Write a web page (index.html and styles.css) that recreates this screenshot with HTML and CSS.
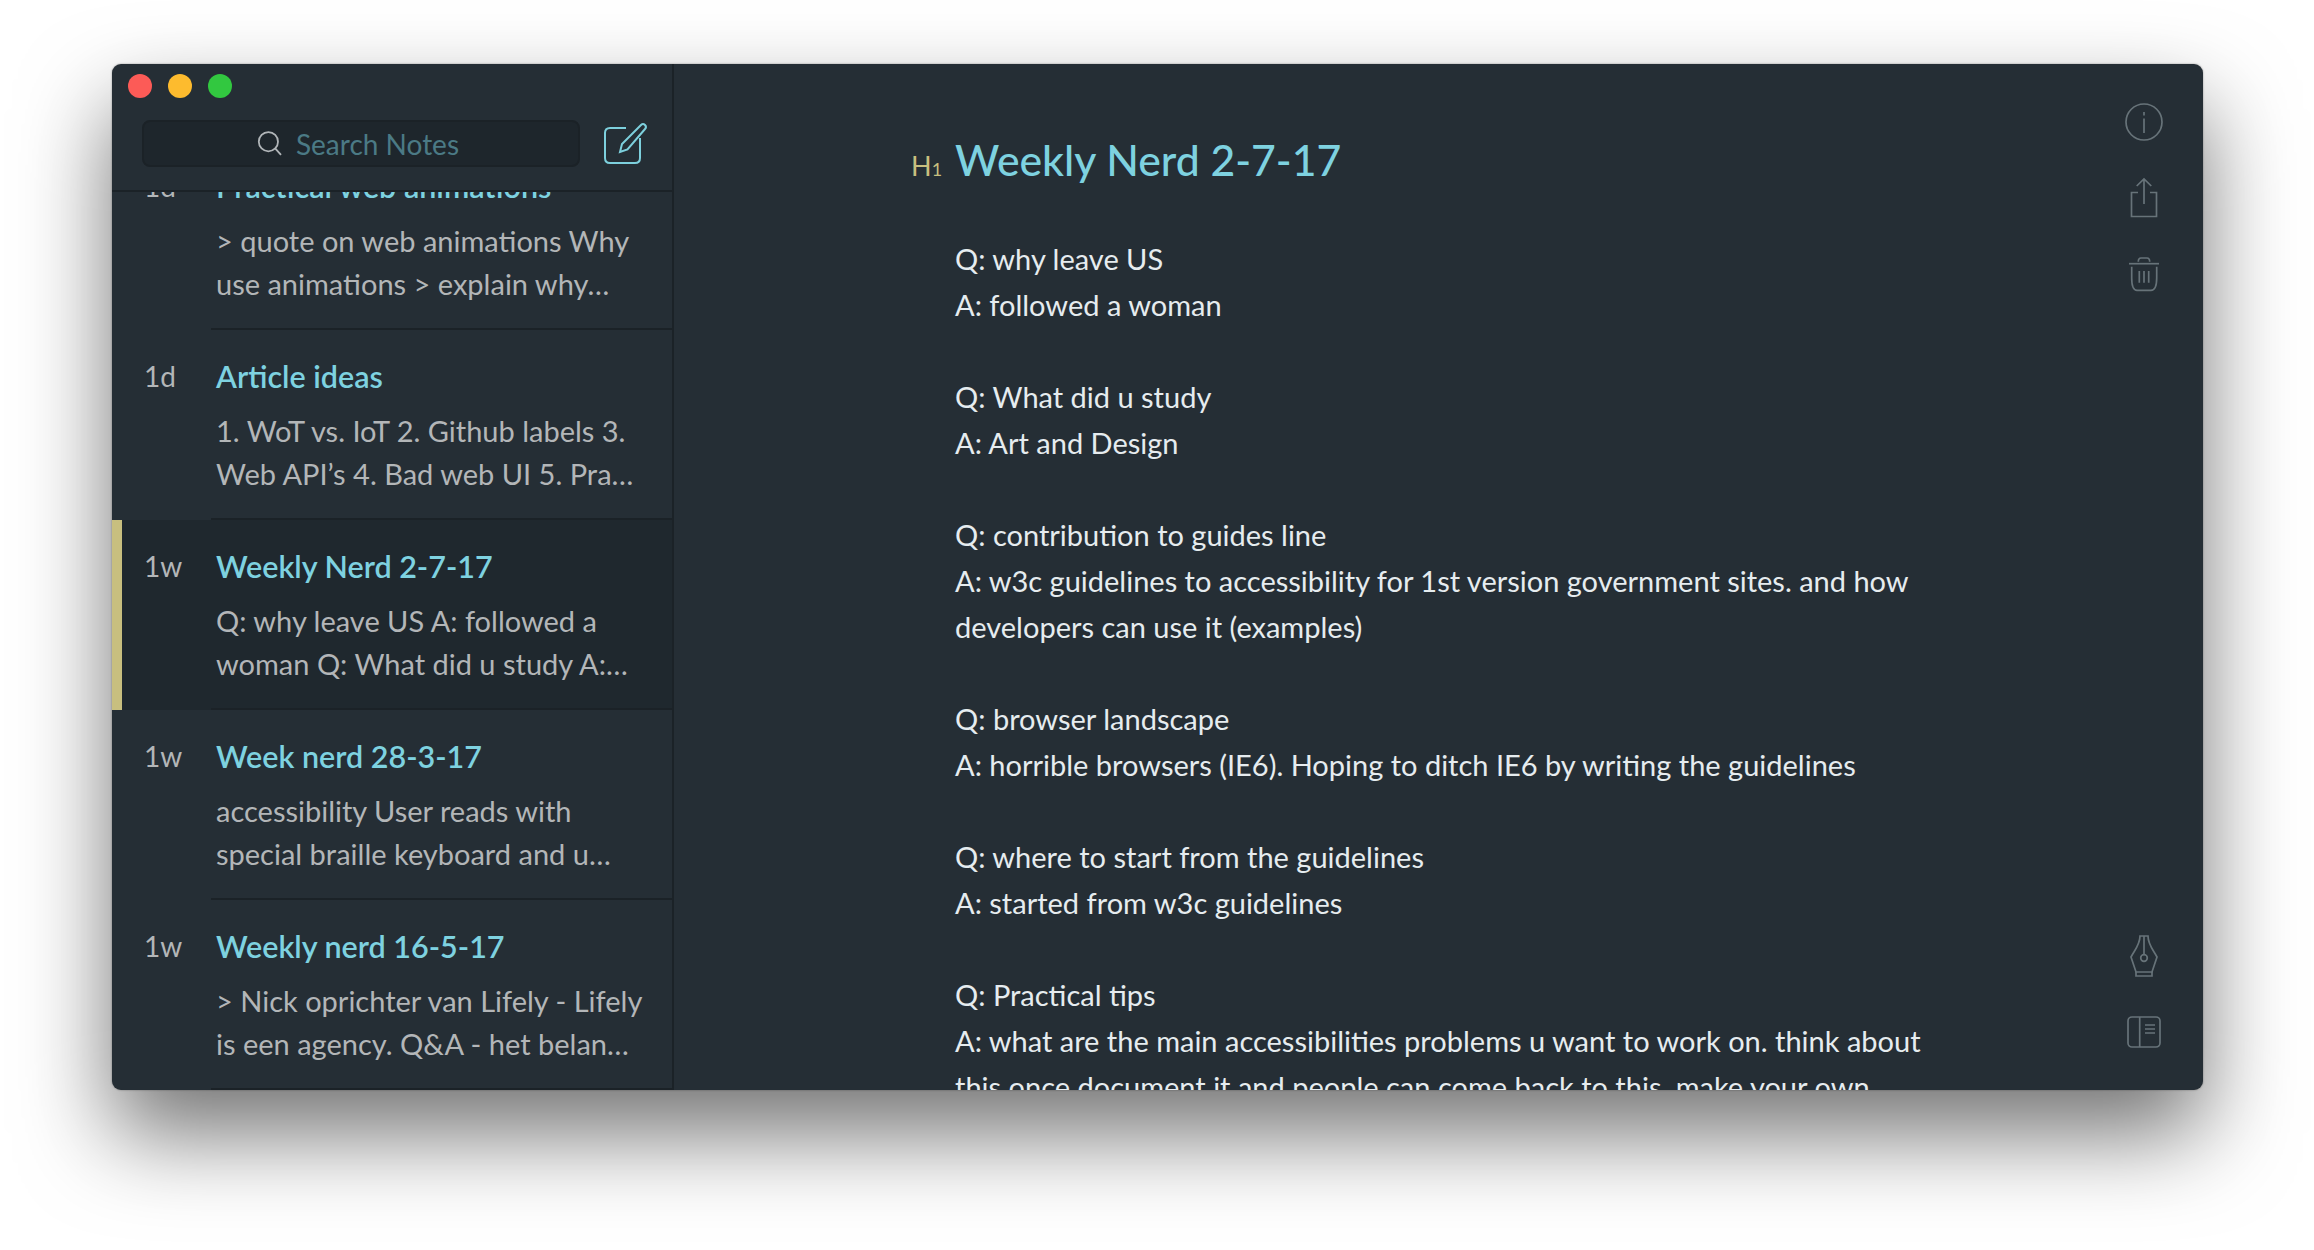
FILE: index.html
```html
<!DOCTYPE html>
<html lang="en">
<head>
  <meta charset="UTF-8">
  <title>Weekly Nerd 2-7-17</title>
  <link rel="stylesheet" href="styles.css">
</head>
<body>
  <div class="window">
    <aside class="sidebar">
      <div class="titlebar">
        <span class="dot dot-red"></span>
        <span class="dot dot-yellow"></span>
        <span class="dot dot-green"></span>
      </div>
      <div class="search-row">
        <div class="search">
          <svg class="search-icon" width="28" height="28" viewBox="0 0 28 28" fill="none" stroke="#b0b5b8" stroke-width="1.8">
            <circle cx="11.4" cy="11.7" r="9.6"/>
            <path d="M18.4 18.6 L24 24.8"/>
          </svg>
          <span class="search-text">Search Notes</span>
        </div>
        <svg class="compose" width="48" height="48" viewBox="0 0 48 48" fill="none" stroke="#7dd0dd" stroke-width="2">
          <path d="M24 8 H8 Q3 8 3 13 V38 Q3 43 8 43 H33 Q38 43 38 38 V18"/>
          <path d="M18 32 L20 24 L39 5 Q41 3 43 5 Q45 7 43 9 L25.5 29.5 Z"/>
        </svg>
      </div>
      <div class="notes">
        <div class="note note-first">
          <div class="age">1d</div>
          <div class="note-body">
            <div class="note-title">Practical web animations</div>
            <div class="note-text">&gt; quote on web animations Why<br>use animations &gt; explain why…</div>
          </div>
        </div>
        <div class="note">
          <div class="age">1d</div>
          <div class="note-body">
            <div class="note-title">Article ideas</div>
            <div class="note-text">1. WoT vs. IoT 2. Github labels 3.<br>Web API’s 4. Bad web UI 5. Pra…</div>
          </div>
        </div>
        <div class="note selected">
          <div class="age">1w</div>
          <div class="note-body">
            <div class="note-title">Weekly Nerd 2-7-17</div>
            <div class="note-text">Q: why leave US A: followed a<br>woman Q: What did u study A:…</div>
          </div>
        </div>
        <div class="note">
          <div class="age">1w</div>
          <div class="note-body">
            <div class="note-title">Week nerd 28-3-17</div>
            <div class="note-text">accessibility User reads with<br>special braille keyboard and u…</div>
          </div>
        </div>
        <div class="note">
          <div class="age">1w</div>
          <div class="note-body">
            <div class="note-title">Weekly nerd 16-5-17</div>
            <div class="note-text">&gt; Nick oprichter van Lifely - Lifely<br>is een agency. Q&amp;A - het belan…</div>
          </div>
        </div>
      </div>
    </aside>

    <main class="editor">
      <div class="content">
        <h1 class="doc-title"><span class="h-mark">H<small>1</small></span>Weekly Nerd 2-7-17</h1>
        <p>Q: why leave US<br>A: followed a woman</p>
        <p>Q: What did u study<br>A: Art and Design</p>
        <p>Q: contribution to guides line<br>A: w3c guidelines to accessibility for 1st version government sites. and how<br>developers can use it (examples)</p>
        <p>Q: browser landscape<br>A: horrible browsers (IE6). Hoping to ditch IE6 by writing the guidelines</p>
        <p>Q: where to start from the guidelines<br>A: started from w3c guidelines</p>
        <p>Q: Practical tips<br>A: what are the main accessibilities problems u want to work on. think about<br>this once document it and people can come back to this. make your own</p>
      </div>
      <div class="rail">
        <div class="rail-group">
          <svg width="48" height="48" viewBox="0 0 48 48" fill="none" stroke="#677379" stroke-width="1.7">
            <circle cx="24" cy="24" r="18"/>
            <path d="M24 14 V17.5 M24 20.5 V35"/>
          </svg>
          <svg width="48" height="48" viewBox="0 0 48 48" fill="none" stroke="#677379" stroke-width="1.7">
            <path d="M18 18.5 H11.5 V42.5 H36.5 V18.5 H30"/>
            <path d="M24 30 V5.5 M16.7 12 L24 5 L31.3 12"/>
          </svg>
          <svg width="48" height="48" viewBox="0 0 48 48" fill="none" stroke="#677379" stroke-width="1.7">
            <path d="M9 13.7 H39"/>
            <path d="M18.3 11.7 Q18.3 8 21 8 H27 Q29.7 8 29.7 11.7"/>
            <path d="M11.7 16.7 V28 Q11.7 40.3 17 40.3 H31 Q36.7 40.3 36.7 28 V16.7"/>
            <path d="M19.3 21 V32.7 M24 21 V32.7 M28.7 21 V32.7"/>
          </svg>
        </div>
        <div class="rail-group">
          <svg width="48" height="48" viewBox="0 0 48 48" fill="none" stroke="#677379" stroke-width="1.7">
            <path d="M20 4 C20 13 14 19 11 25 L16 40 H32 L37 25 C34 19 28 13 28 4 Z"/>
            <path d="M16 40 V44 H32 V40 M24 4 V22.7"/>
            <circle cx="24" cy="26" r="3.3"/>
          </svg>
          <svg width="48" height="48" viewBox="0 0 48 48" fill="none" stroke="#677379" stroke-width="1.7">
            <rect x="8" y="9" width="32" height="30" rx="4"/>
            <path d="M19.7 9 V39 M25 17 H35 M25 21 H35 M25 25 H35"/>
          </svg>
        </div>
      </div>
    </main>
  </div>
</body>
</html>
```

FILE: styles.css
```css
* {
  margin: 0;
  padding: 0;
  box-sizing: border-box;
}

html, body {
  height: 100%;
  background-color: #fff;
  overflow: hidden;
}

body {
  font-family: Lato, "Open Sans", sans-serif;
  padding: 64px 111px 160px 112px;
}

.window {
  display: flex;
  height: 1026px;
  background-color: #252e35;
  border-radius: 9px;
  overflow: hidden;
  box-shadow: 0 0 2px rgba(0, 0, 0, 0.4), 0 44px 90px rgba(0, 0, 0, 0.55);
}

/* sidebar */
.sidebar {
  display: flex;
  flex-direction: column;
  width: 562px;
  flex-shrink: 0;
  border-right: 2px solid #1b2227;
}

.titlebar {
  display: flex;
  gap: 16px;
  height: 56px;
  padding: 10px 0 0 16px;
}

.dot {
  width: 24px;
  height: 24px;
  border-radius: 50%;
}

.dot-red { background-color: #fc5b57; }
.dot-yellow { background-color: #fdbb2e; }
.dot-green { background-color: #32c840; }

.search-row {
  display: flex;
  align-items: center;
  gap: 22px;
  height: 72px;
  padding-left: 30px;
  border-bottom: 2px solid #1b2227;
}

.search {
  display: flex;
  align-items: center;
  justify-content: center;
  gap: 11px;
  width: 438px;
  height: 47px;
  margin-top: -23px;
  padding-right: 6px;
  background-color: #1e262c;
  border: 2px solid #1b2227;
  border-radius: 8px;
}

.search-text {
  font-size: 28px;
  color: #4b7a85;
}

.compose {
  margin-top: -23px;
}

.notes {
  flex: 1;
  overflow: hidden;
}

.note {
  display: flex;
  height: 190px;
  padding-left: 33px;
}

.note-first {
  margin-top: -52px;
}

.note.selected {
  padding-left: 23px;
  background-color: #1f282e;
  border-left: 10px solid #c8bf7f;
}

.age {
  width: 67px;
  margin-left: -1px;
  padding-top: 28px;
  font-size: 28px;
  line-height: 36px;
  color: #b3b6b8;
}

.note-body {
  flex: 1;
  padding: 28px 0 0 5px;
  border-bottom: 2px solid #1b2227;
}

.note-title {
  font-size: 30.5px;
  font-weight: 600;
  line-height: 36px;
  color: #7ed2e0;
}

.note-text {
  margin-top: 15px;
  font-size: 29px;
  line-height: 43px;
  color: #b3b6b8;
  white-space: nowrap;
}

/* editor */
.editor {
  display: flex;
  flex: 1;
  min-width: 0;
}

.content {
  flex: 1;
  padding: 68px 0 0 281px;
  overflow: hidden;
  font-size: 29px;
  line-height: 46px;
  color: #e6ecef;
  white-space: nowrap;
}

.content p {
  margin-bottom: 46px;
}

.doc-title {
  display: flex;
  align-items: baseline;
  margin-left: -44px;
  margin-bottom: 39px;
  font-size: 42.7px;
  font-weight: 500;
  line-height: 56px;
  color: #7ed2e0;
}

.h-mark {
  width: 44px;
  font-size: 27px;
  font-weight: 400;
  color: #c8bf7f;
}

.h-mark small {
  font-size: 18px;
}

.rail {
  display: flex;
  flex-direction: column;
  justify-content: space-between;
  align-items: center;
  width: 118px;
  flex-shrink: 0;
  padding: 34px 0;
}

.rail-group {
  display: flex;
  flex-direction: column;
  gap: 28px;
}
```
